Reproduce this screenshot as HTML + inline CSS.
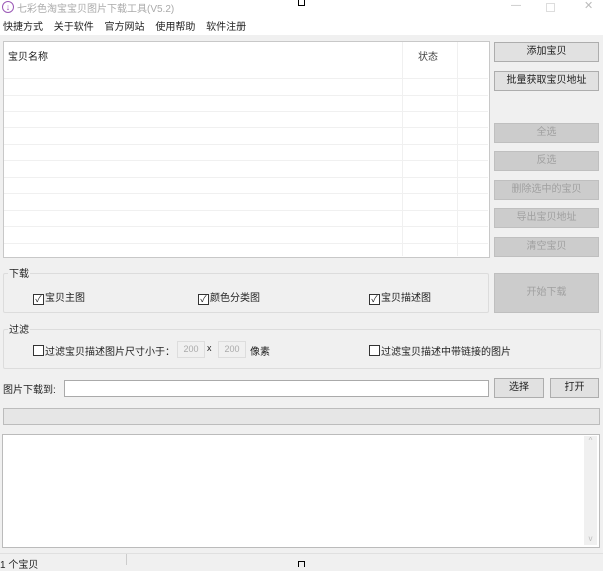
<!DOCTYPE html><html><head><meta charset="utf-8"><style>
body{margin:0;width:603px;height:565px;background:#f0f0f0;position:relative;overflow:hidden;font-family:"Liberation Sans","Noto Sans CJK SC",sans-serif;font-size:10px;color:#222}
.a{position:absolute}
.btn{position:absolute;left:494px;width:103px;height:18px;border:1px solid #adadad;background:#e1e1e1;text-align:center;line-height:18px;font-size:10px}
.dis{color:#a0a0a0;background:#cccccc;border-color:#bfbfbf}
.hl{position:absolute;left:4px;width:484px;height:1px;background:#f0f0f0}
.cb{display:inline-block;width:9px;height:9px;border:1px solid #333;vertical-align:-1px;margin-right:1px;font-size:9px;line-height:9px;text-align:center;background:#fff}
.grp{position:absolute;border:1px solid #dcdcdc;border-radius:2px}
</style></head><body>
<div class="a" style="left:0;top:0;width:603px;height:35px;background:#fff"></div>
<div class="a" style="left:2px;top:1px;width:10px;height:10px;border-radius:50%;border:1px solid #9b59b6;color:#9b59b6;font-size:9px;line-height:10px;text-align:center">↓</div>
<div class="a" style="left:17px;top:0;color:#aaa;font-size:10px">七彩色淘宝宝贝图片下载工具(V5.2)</div>
<div class="a" style="left:298px;top:0;width:5px;height:5px;border:1px solid #000;border-top:none"></div>
<div class="a" style="left:511px;top:0;color:#bbb">—</div>
<div class="a" style="left:546px;top:3px;width:7px;height:7px;border:1px solid #ddd"></div>
<div class="a" style="left:584px;top:-1px;color:#bbb;font-size:11px">✕</div>
<div class="a" style="left:3px;top:18px;font-size:10px;word-spacing:8px">快捷方式 关于软件 官方网站 使用帮助 软件注册</div>
<div class="a" style="left:3px;top:41px;width:485px;height:215px;background:#fff;border:1px solid #c8c8c8"></div>
<div class="a" style="left:8px;top:48px">宝贝名称</div>
<div class="a" style="left:418px;top:48px;color:#444">状态</div>
<div class="a" style="left:402px;top:42px;width:1px;height:214px;background:#f0f0f0"></div>
<div class="a" style="left:457px;top:42px;width:1px;height:214px;background:#f0f0f0"></div>
<div class="hl" style="top:78px"></div><div class="hl" style="top:95px"></div><div class="hl" style="top:111px"></div><div class="hl" style="top:127px"></div><div class="hl" style="top:144px"></div><div class="hl" style="top:160px"></div><div class="hl" style="top:177px"></div><div class="hl" style="top:193px"></div><div class="hl" style="top:210px"></div><div class="hl" style="top:226px"></div><div class="hl" style="top:243px"></div>
<div class="btn" style="top:42px">添加宝贝</div>
<div class="btn" style="top:71px">批量获取宝贝地址</div>
<div class="btn dis" style="top:123px">全选</div>
<div class="btn dis" style="top:151px">反选</div>
<div class="btn dis" style="top:180px">删除选中的宝贝</div>
<div class="btn dis" style="top:208px">导出宝贝地址</div>
<div class="btn dis" style="top:237px">清空宝贝</div>
<div class="grp" style="left:3px;top:273px;width:484px;height:38px"></div>
<div class="a" style="left:8px;top:265px;background:#f0f0f0;padding:0 1px">下载</div>
<div class="a" style="left:33px;top:289px"><span class="cb">✓</span>宝贝主图</div>
<div class="a" style="left:198px;top:289px"><span class="cb">✓</span>颜色分类图</div>
<div class="a" style="left:369px;top:289px"><span class="cb">✓</span>宝贝描述图</div>
<div class="a dis" style="left:494px;top:273px;width:103px;height:38px;border:1px solid #bfbfbf;background:#ccc;color:#a0a0a0;text-align:center;line-height:38px">开始下载</div>
<div class="grp" style="left:3px;top:329px;width:596px;height:38px"></div>
<div class="a" style="left:8px;top:321px;background:#f0f0f0;padding:0 1px">过滤</div>
<div class="a" style="left:33px;top:343px"><span class="cb"></span>过滤宝贝描述图片尺寸小于：</div>
<div class="a" style="left:177px;top:341px;width:26px;height:15px;border:1px solid #ddd;background:#f0f0f0;color:#aaa;font-size:9px;text-align:center;line-height:15px">200</div>
<div class="a" style="left:207px;top:343px;font-size:9px">x</div>
<div class="a" style="left:218px;top:341px;width:26px;height:15px;border:1px solid #ddd;background:#f0f0f0;color:#aaa;font-size:9px;text-align:center;line-height:15px">200</div>
<div class="a" style="left:250px;top:343px">像素</div>
<div class="a" style="left:369px;top:343px"><span class="cb"></span>过滤宝贝描述中带链接的图片</div>
<div class="a" style="left:3px;top:381px">图片下载到:</div>
<div class="a" style="left:64px;top:380px;width:423px;height:15px;background:#fff;border:1px solid #aaa"></div>
<div class="a" style="left:494px;top:378px;width:48px;height:18px;border:1px solid #adadad;background:#e1e1e1;text-align:center;line-height:18px">选择</div>
<div class="a" style="left:550px;top:378px;width:47px;height:18px;border:1px solid #adadad;background:#e1e1e1;text-align:center;line-height:18px">打开</div>
<div class="a" style="left:3px;top:408px;width:595px;height:15px;border:1px solid #bcbcbc;background:#e6e6e6"></div>
<div class="a" style="left:2px;top:434px;width:596px;height:112px;border:1px solid #bbb;background:#fff"></div>
<div class="a" style="left:584px;top:436px;width:13px;height:109px;background:#f0f0f0;color:#bbb;font-size:8px;text-align:center">^<div style="position:absolute;bottom:2px;width:13px">v</div></div>
<div class="a" style="left:0;top:553px;width:603px;height:12px;background:#f0f0f0;border-top:1px solid #e0e0e0"></div>
<div class="a" style="left:126px;top:554px;width:1px;height:11px;background:#ccc"></div>
<div class="a" style="left:0;top:556px">1 个宝贝</div>
<div class="a" style="left:298px;top:561px;width:5px;height:5px;border:1px solid #000;border-bottom:none"></div>
</body></html>
